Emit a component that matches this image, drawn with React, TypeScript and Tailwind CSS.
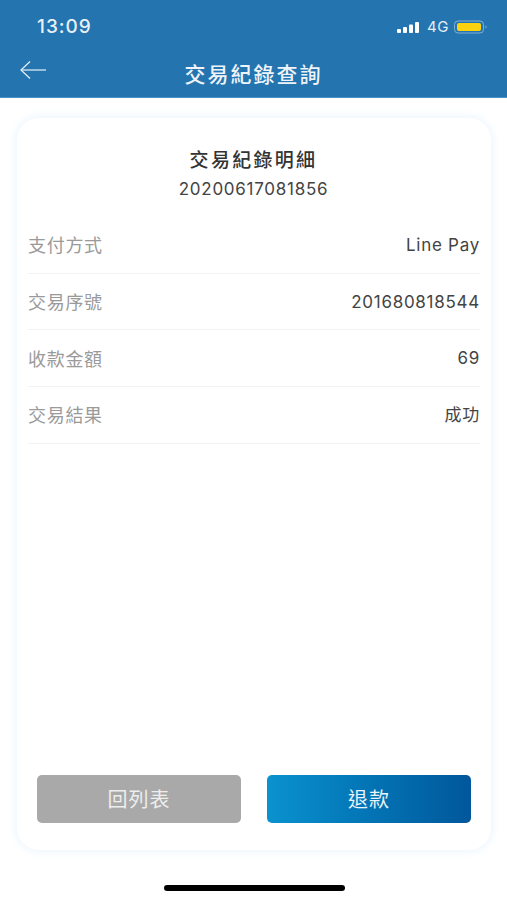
import React from 'react';

const sans = 'font-["Inter","Noto_Sans_CJK_TC",sans-serif]';

const rows = [
    { label: '支付方式', value: 'Line Pay' },
    { label: '交易序號', value: '201680818544' },
    { label: '收款金額', value: '69' },
    { label: '交易結果', value: '成功' },
];

const StatusIcons = () => (
    <div className="flex items-center">
        <svg width="24" height="12" viewBox="0 0 24 12" className="mr-[6px]">
            <rect x="0" y="8" width="4" height="4" rx="1" fill="#fff" />
            <rect x="6" y="6" width="4" height="6" rx="1" fill="#fff" />
            <rect x="12" y="3.5" width="4" height="8.5" rx="1" fill="#fff" />
            <rect x="18" y="1" width="4" height="11" rx="1" fill="#fff" />
        </svg>
        <span className="text-[15px] leading-none text-[#e6eef5] mr-[5px] tracking-[0.5px]">4G</span>
        <svg width="33" height="14" viewBox="0 0 33 14">
            <rect x="0.5" y="1" width="29" height="12" rx="3.5" fill="none" stroke="#7fb0d4" strokeWidth="1" />
            <rect x="3" y="3" width="24" height="8" rx="2" fill="#fcd20f" />
            <path d="M31.5 5.5 C33 6 33 8 31.5 8.5 Z" fill="#7fb0d4" />
        </svg>
    </div>
);

export default function App() {
    return (
        <div className={`${sans} w-[507px] h-[900px] bg-white flex flex-col overflow-hidden`}>
            {/* Header */}
            <div className="h-[98px] shrink-0 bg-[#2474b0] border-b border-[#4a93c4] text-white">
                <div className="flex items-center justify-between pl-[37px] pr-[20px] pt-[17px] h-[36px]">
                    <span className="text-[19px] leading-none font-medium tracking-[1px] text-[#e8f0f6]">13:09</span>
                    <StatusIcons />
                </div>
                <div className="relative flex justify-center pt-[25px]">
                    <svg width="28" height="20" viewBox="0 0 28 20" fill="none" stroke="#e8f0f6" strokeWidth="1.2" className="absolute left-[19px] top-[24px]">
                        <path d="M27 10H2" />
                        <path d="M11 1.5L2 10l9 8.5" />
                    </svg>
                    <span className="text-[21px] leading-[28px] font-medium tracking-[2px] text-[#eef4f9]">交易紀錄查詢</span>
                </div>
            </div>

            {/* Card */}
            <div className="mt-[20px] ml-[17px] w-[474px] h-[732px] rounded-[22px] bg-white shadow-[0_0_10px_2px_#eef6fd] flex flex-col px-[11px]">
                <div className="pt-[30px] text-center text-[#333]">
                    <div className="text-[19px] leading-[26px] font-medium tracking-[2.3px] -ml-[1px]">交易紀錄明細</div>
                    <div className="text-[17px] leading-[24px] mt-[3px] tracking-[0.73px] text-[#444] -ml-[1px]">20200617081856</div>
                </div>

                <div className="mt-[16px]">
                    {rows.map(row => (
                        <div key={row.label} className="h-[56.7px] pt-[2px] flex items-center justify-between border-b border-[#f0f2f4]">
                            <span className="text-[18px] tracking-[0.7px] text-[#9a9a9a]">{row.label}</span>
                            <span className="text-[17px] tracking-[0.73px] text-[#444]">{row.value}</span>
                        </div>
                    ))}
                </div>

                <div className="mt-auto mb-[27px] px-[9px] flex justify-between">
                    <button className="w-[204px] h-[48px] pt-[2px] rounded-[5px] bg-[#a9a9a9] text-[#eeeeee] text-[20px] tracking-[1px]">回列表</button>
                    <button className="w-[204px] h-[48px] pt-[2px] rounded-[5px] bg-gradient-to-r from-[#0b92cf] to-[#01579b] text-[#eaf4fa] text-[20px] tracking-[1px]">退款</button>
                </div>
            </div>

            {/* Home indicator */}
            <div className="mt-[35px] ml-[164px] w-[181px] h-[6px] rounded-full bg-black" />
        </div>
    );
}
